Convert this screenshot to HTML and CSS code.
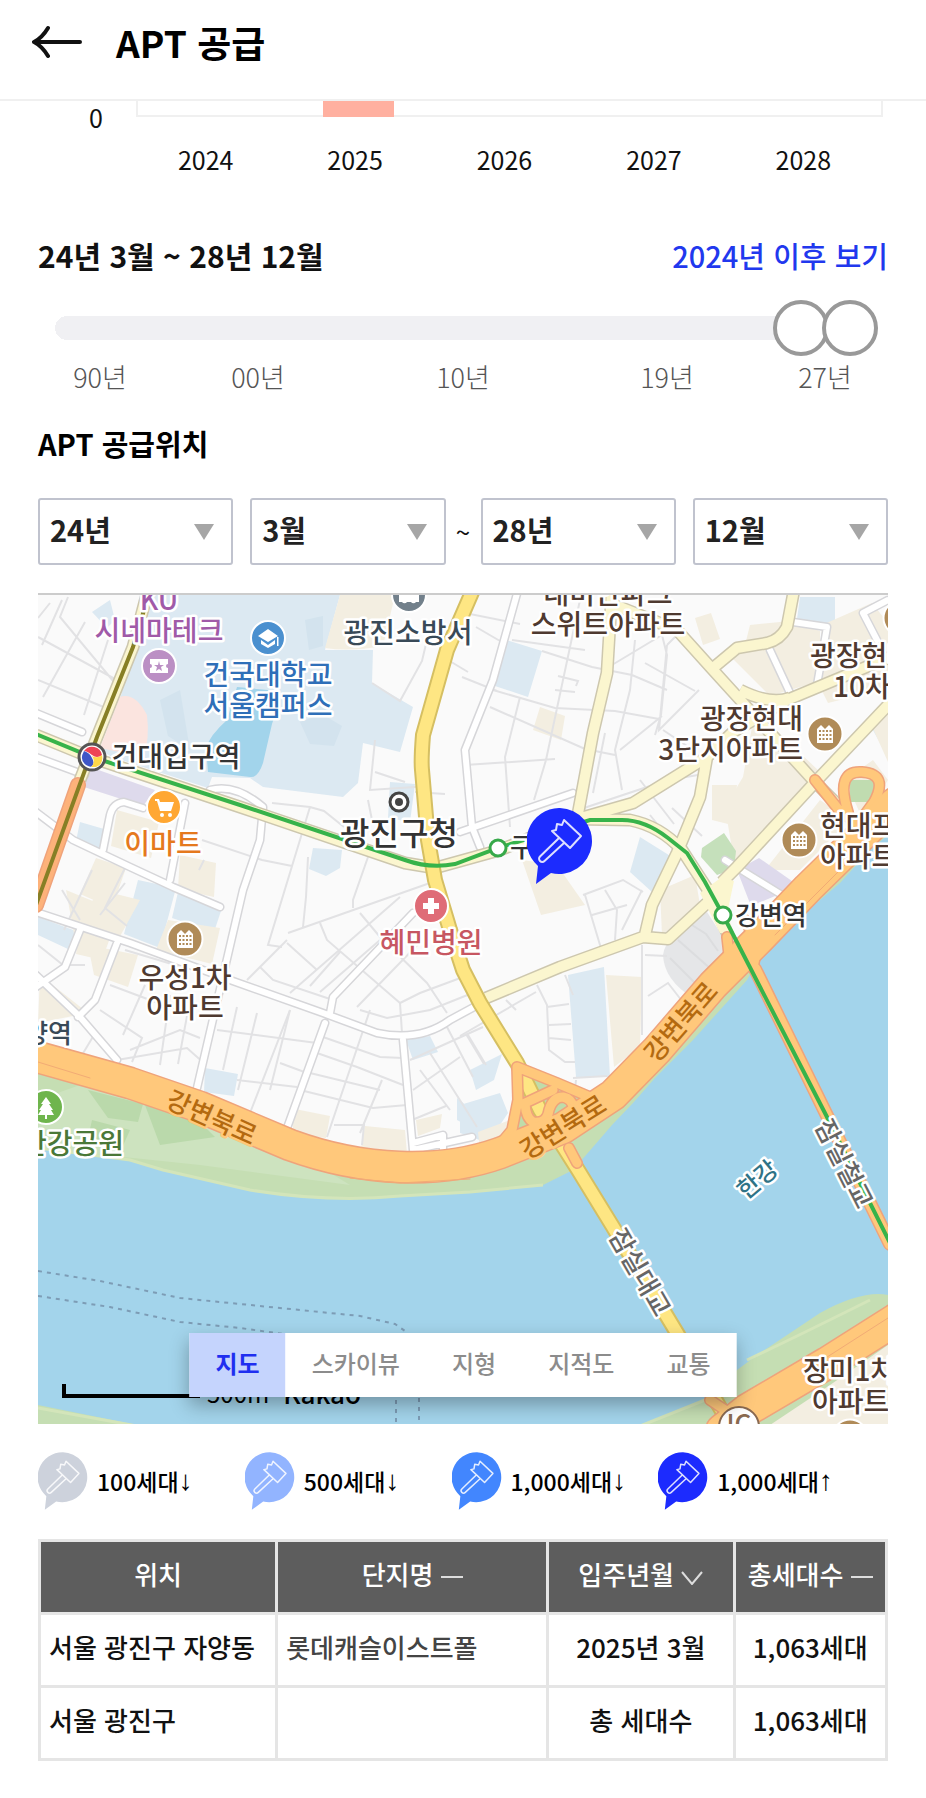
FILE: index.html
```html
<!DOCTYPE html>
<html lang="ko">
<head>
    <meta charset="UTF-8">
    <meta name="viewport" content="width=device-width, initial-scale=1.0">
    <title>APT 공급</title>
    <link rel="stylesheet" href="styles.css">
</head>
<body>
    <!-- 공통 아이콘 -->
    <svg class="sprite" aria-hidden="true">
        <symbol id="pin" viewBox="0 0 66 76">
            <path d="M33 0a33 33 0 1 1-9 65L9 76l2-18A33 33 0 0 1 33 0z" fill="currentColor"/>
            <path d="M25 23l4-1 1-6 5 1 2-5 17 16-11 12zM32 30L13 48.500a3 3 0 0 0 4.500 4.500L37 35" fill="none" stroke="#fff" stroke-opacity=".85" stroke-width="2" stroke-linejoin="round"/>
        </symbol>
        <symbol id="apt" viewBox="-20 -20 40 40">
            <circle r="17.500" fill="#b08b58" stroke="#fff" stroke-width="2"/>
            <path d="M-8 9V-5l4-4 4 4 4-4 4 4V9z" fill="#fff"/>
            <path d="M-6-3H7M-6 1H7M-6 5H7" stroke="#b08b58" stroke-width="2" stroke-dasharray="2 1.500"/>
        </symbol>
    </svg>

    <header class="header">
        <button type="button" class="back-btn" aria-label="뒤로">
            <svg width="50" height="34" viewBox="0 0 50 34" fill="none" stroke="#111" stroke-width="4" stroke-linecap="round" stroke-linejoin="round"><path d="M48 17H3M16 3Q10 13 2 17q8 4 14 14"/></svg>
        </button>
        <h1>APT 공급</h1>
    </header>

    <main class="container">
        <section class="chart">
            <span class="y-label">0</span>
            <div class="plot"><div class="bar"></div></div>
            <div class="x-labels"><span>2024</span><span>2025</span><span>2026</span><span>2027</span><span>2028</span></div>
        </section>

        <div class="period">
            <h2>24년 3월 ~ 28년 12월</h2>
            <a href="#">2024년 이후 보기</a>
        </div>

        <div class="slider">
            <input type="range" min="0" max="467" value="437" aria-label="시작 시기">
            <input type="range" min="0" max="467" value="467" aria-label="종료 시기">
        </div>
        <div class="slider-labels"><span>90년</span><span>00년</span><span>10년</span><span>19년</span><span>27년</span></div>

        <h2 class="section-title">APT 공급위치</h2>

        <div class="filters">
            <div class="select"><select aria-label="시작 연도"><option>24년</option></select></div>
            <div class="select"><select aria-label="시작 월"><option>3월</option></select></div>
            <span class="tilde">~</span>
            <div class="select"><select aria-label="종료 연도"><option>28년</option></select></div>
            <div class="select"><select aria-label="종료 월"><option>12월</option></select></div>
        </div>

        <div class="map">
            <svg class="map-canvas" viewBox="38 595 850 829" role="img" aria-label="광진구 지도">
                <defs>
                    <path id="white-roads" d="M36 713L82 732M36 757L85 775M36 812L73 840 130 867 173 887 220 907M103 850L110 815Q113 803 124 802L143 808M185 803L170 880M210 790Q235 783 263 807L260 840 243 890 197 1088M36 912L130 943 230 980 323 1013 377 1033Q420 1042 450 1020L487 1000M80 930L65 967 36 987M117 943L95 1000 78 1017M36 975L80 1017 117 1060M330 1013L333 997 413 913M325 1023L287 1128M403 1040L413 1150 472 1137M413 1143l30-8v14M518 590L493 680 465 750 472 827 480 847M460 832L573 793M793 622L827 627 817 685M770 650L790 693M888 600L863 613 877 640M725 860L790 900"/>
                    <path id="local-roads" d="M36 735L90 757 240 807 405 863 435 868 500 850 577 819 633 803 707 757 733 732 787 700 890 657M612 590L607 673 593 733 577 819M612 604L677 630 713 670 743 703 813 780 845 812M794 590L787 627Q780 640 767 643L737 648 713 668M890 703L820 777 737 867 722 882M707 757L700 797 677 853 652 905 645 935M486 998L560 967 643 937 668 939 707 903M577 819L630 820Q660 826 682 850L708 890 728 935M148 590L133 647 97 737 80 780M740 690Q770 705 790 698"/>
                    <path id="main-road" d="M473 590L447 650 423 735Q421 760 422 770L428 840 435 880 450 930 463 970 480 1003 517 1063 540 1110 578 1170 613 1227 677 1333 730 1425"/>
                    <path id="highway" d="M30 1055L130 1083 200 1107 290 1145Q345 1165 400 1167T500 1153L563 1128 613 1095 657 1050 713 985 760 938 808 888 895 803"/>
                    <path id="olympic-road" d="M895 1320L827 1363 747 1410 722 1430"/>
                    <path id="ramps" d="M517 1067L518 1100 512 1130 497 1148M517 1067L557 1083 597 1100M553 1090L523 1104M525 1104Q526 1118 533 1122 547 1124 549 1110 553 1097 563 1097 572 1099 573 1107M569 1148L577 1163M815 780L843 815 870 825M848 812Q835 770 862 772T874 802L850 835M727 937L729 955M745 920L758 945 753 967M710 1400l15 10"/>
                    <path id="rail-bridge" d="M755 969L890 1244"/>
                </defs>
                <rect x="38" y="595" width="850" height="830" fill="#fafafa"/>

                <!-- 구역 -->
                <g fill="#dce9f2">
                    <path d="M147 595H340L325 650H373L372 683 413 707 400 752 363 743 358 783 343 797 303 792 263 787 250 778 212 777 208 788 112 757 100 750 118 707z"/>
                    <path d="M92 612l18-12 5 20-8 8zM80 822l24 7-4 20-24-8zM390 782l25 2-5 38-22-4zM313 848l29 2-2 18-14 8-17-7z"/>
                    <path d="M506 640l36 11-14 46-36-12zM640 837l32 20-20 35-22-20zM800 597l35 0 0 28-38-6zM870 725l18-18v50z"/>
                    <path d="M138 880l38 8-16 60-36-14zM178 892l44 16-8 24-42-14zM38 917l38 14-8 18-30-14zM205 1068l33 6-4 22-30-4zM406 1040l24-4 8 16-25 8z"/>
                    <path d="M568 975l36-8 6 110-34 0zM470 1070l32-16-8 26-18 10zM460 1105l40-12 8 20-20 30-28-10zM457 1098l15 12v18l-15-8z"/>
                </g>
                <path d="M237 687L268 690Q278 710 272 724L263 763Q258 778 250 777L208 772 206 748Q210 735 227 720z" fill="#a2d4eb"/>
                <path d="M300 722l22-8 20 12-8 20-24-2zM305 620l18-4v30l-14 4zM160 700l20-10 10 60-22-14z" fill="#d3e3ee"/>
                <path d="M120 697Q135 692 147 715Q150 740 143 757L100 748z" fill="#fbe4df"/>
                <path d="M90 767L155 790 143 806 84 787z" fill="#dedaec"/>
                <g fill="#f3eee1">
                    <path d="M340 595H395L383 646Q350 652 325 648z"/>
                    <path d="M117 810l42 12-8 36-40-12zM180 855l36 8-2 34-36-8zM96 858l30 10-14 40-32-14zM66 890l34 14-26 30zM40 975l48 38-50 10zM88 945l50 10-10 32-34-12zM168 920l52 8-8 36-56-14zM80 930l30 8-8 22-26-6zM100 890l40 10-22 40-42-16z"/>
                    <path d="M695 618l16-5 9 26-17 6zM750 625l40-4 30 10v50l-50 15-40-40 16-15z"/>
                    <path d="M540 707l25 9-4 24-28-10zM822 625l50-22 16 20v65l-60 15-10-20zM755 710l65 62-85 95-10-60 18-30zM870 722l18 40v-60zM845 780l28-20 15 20-25 40z"/>
                    <path d="M522 860l35 5 28 40-44 10zM606 975l36 2-2 70-26 20zM712 785l25 0-5 40-20-5zM660 890l35-15 5 30-38 30zM290 1108l40 8-4 22-32-4zM365 1126l40 4 2 24-46-6zM416 1120l26-6-2 14-22 8zM478 1132l32-12-5 30-25 0zM820 800l30 20-50 50-35 0z"/>
                </g>
                <path d="M737 870l22-12 40 28-48 20z" fill="#dedaec"/>
                <path d="M702 848l22-15 12 18-2 18-17 6-16-18z" fill="#c5e0bb"/>
                <path d="M707 912L725 940 727 955 693 998Q664 980 663 955Q665 935 707 912z" fill="#e5e6e8"/>
                <path d="M692 925l14 9 12 17M678 940l34 30M670 958l26 26" stroke="#dcdddf" stroke-width="2" fill="none"/>
                <path d="M520 1070L560 1085 590 1100 545 1140 512 1140z" fill="#bfdcaa"/>

                <!-- 한강 -->
                <path d="M38 1060Q110 1075 200 1115T400 1172L540 1140 640 1060 755 930 888 800V1425H38z" fill="#c5deb3"/>
                <path d="M38 1100L80 1085 150 1100 260 1130 350 1185 200 1165 38 1148z" fill="#cde3bf"/>
                <path d="M88 1090l55 14-5 18-30-4zM92 1120l38 10-8 18-34-10zM145 1105l50 12 20 20-55 8z" fill="#bad9ab"/>
                <path d="M38 1148L130 1160 163 1170 250 1190Q330 1203 400 1196L470 1192 543 1185 573 1170 593 1147 612 1125 633 1103 655 1078 693 1040 747 980 758 960 793 923 840 883 870 850 888 835V1295Q862 1290 820 1313L760 1353 737 1370 710 1397 643 1425H137L38 1405z" fill="#a3d4eb"/>
                <path d="M38 1148L130 1160 163 1170 250 1190Q330 1203 400 1196L470 1192 543 1185M747 1360Q800 1335 870 1300M38 1408l99 18M640 1426l70-28" fill="none" stroke="#d3e5ba" stroke-width="3"/>
                <path d="M888 1345L830 1385 770 1425H888z" fill="#f3eee1"/>
                <path d="M38 1271L100 1281 180 1298 300 1310 360 1316 395 1324 405 1331M38 1296L110 1307 180 1322 240 1328 290 1335M396 1400v26M419 1398v28" fill="none" stroke="#7d9cb5" stroke-width="2" stroke-dasharray="4 5"/>

                <!-- 골목길 -->
                <g fill="none" stroke="#e2e2e4" stroke-width="2">
                    <path d="M50 603l-12 15M68 597l-8 20 54 65M38 637l77 42M38 680l68 28M85 622l-42 75M62 600L42 645M108 640L84 715M372 683l28 18 22-40 8-34M448 660l20 12M375 740l-5 50 60-4M375 772l30 10M415 792l30 2"/>
                    <path d="M272 803l38 4 14 4 20 16M310 807L268 945l14 2M308 857l-2 40-3 30M368 857l-15 43v8M368 800l4 20M204 860l-5 10M202 840l60 20 30 6M290 1010l-40 103M288 933l142-50M287 940l-40 40M400 897L290 993M380 940l-60 52M357 1007l70-72M320 923l7 17 73 63 2 30M287 943l30 27M260 967l13 13 60 20M360 913l20 24 47 46 20 30M360 1010l27 8 43-8 50-20M400 1003l20-10 43-16M340 952l-30 34"/>
                    <path d="M237 1007l-14 63M257 1013l-19 77M290 1010l-20 80M370 1010l-43 127M382 1080l-22 53M217 1030l100 13M280 1063l27 10M237 1080l60 7M323 1037l57 20 23 1M317 1053l40 14 46 18M310 1073l70 17M300 1090l73 18 34-3M430 1053l47 74M410 1060l73-33M413 1090l47-33M447 1027l26 50M420 1070l30 40M412 1120l34-14M468 1035l18 30M334 1125h30l-2 20"/>
                    <path d="M460 612l60 12M476 627l24 14M462 677l35 14M542 651l50 16 40 8 35 15M493 690l62 18 60 3 44 8M490 707l95 42 30 6M512 640L585 650M520 697l-15 60 5 70M580 600l-34 160-12 40M605 733l-12 60M612 665l50-30 5 20-6 60-6 20M635 640l-5 50-15 60 7 40M645 663l50 28M667 645l-8 85 40-40M667 645l14-14M640 605v20M465 765l90-6M620 750l42-34M663 730l30 20M558 676l20 5-2 5M555 690l20 2M578 810l60-20 30-10 30-5M640 780l34 44M672 808l30 28M650 815l48 60"/>
                    <path d="M585 895l18 60M583 895l40-15 20 12M592 915l35-10M605 890l12 20-2 30M642 890l-20 40M560 967l5-5 40-10M642 945v90M537 985l10 20 2 45 16 12h10M547 1007l22-3M549 1025l22-1M549 1038l22 2M565 975l8 20M506 1000l10 10M460 1036l76-44M466 1034l18 30M645 955l22 1M648 996l20-13 14 18M576 1080l-2 18M607 1076l-34 2"/>
                    <path d="M62 890l18 30M92 870l-28 60M125 868l-20 40 22 18M100 915l25-32M125 950l60 18M145 985l-22 50M100 1010l42 28-10 24M117 1060l70-12 18 16M82 1055l12-20M170 995l-10 70M190 1000l-12 64M110 985l80 30M130 1050l50-20 20 8M38 945l25 20 22 0"/>
                </g>

                <!-- 흰 도로 -->
                <g fill="none" stroke-linejoin="round" stroke-linecap="round">
                    <use href="#white-roads" stroke="#d6d6d9" stroke-width="9"/>
                    <use href="#white-roads" stroke="#fff" stroke-width="6"/>
                </g>

                <!-- 간선도로 -->
                <g fill="none" stroke-linejoin="round">
                    <use href="#local-roads" stroke="#cdc7ae" stroke-width="13"/>
                    <use href="#local-roads" stroke="#fbf6cf" stroke-width="10"/>
                    <path d="M700 893l22-16 12 4-6 28 4 24-12 0z" fill="#fbf6cf"/>
                    <use href="#main-road" stroke="#d5bf62" stroke-width="16"/>
                    <use href="#main-road" stroke="#fee683" stroke-width="12"/>
                </g>

                <!-- 강변북로, 올림픽대로 -->
                <path d="M850 780h24v22h-24z" fill="#c0dcb0"/>
                <g fill="none" stroke-linejoin="round" stroke-linecap="round">
                    <g stroke="#efa37b">
                        <use href="#highway" stroke-width="33"/>
                        <use href="#olympic-road" stroke-width="34"/>
                        <use href="#ramps" stroke-width="12"/>
                        <use href="#rail-bridge" stroke-width="14"/>
                        <path d="M78 785L36 905" stroke-width="16"/>
                    </g>
                    <g stroke="#ffc87b">
                        <use href="#ramps" stroke-width="9"/>
                        <use href="#rail-bridge" stroke-width="11"/>
                        <use href="#highway" stroke-width="30"/>
                        <use href="#olympic-road" stroke-width="31"/>
                        <path d="M78 785L36 905" stroke="#fdb27a" stroke-width="13"/>
                    </g>
                    <path d="M38 1062L90 1078M350 1178L400 1183 470 1179M775 935L888 822M810 1368L888 1318" stroke="#f2ab75" stroke-width="1"/>
                </g>

                <!-- 지하철 노선 -->
                <g fill="none" stroke-width="4">
                    <path d="M150 590L133 647 97 737 36 905" stroke="#877f25"/>
                    <path d="M36 734L92 757 240 805 405 860Q430 869 455 864L498 848 530 838 590 820H622Q645 820 668 838L687 853 705 882 723 915 827 1117 890 1243" stroke="#37b34a"/>
                </g>
                <g fill="#fff" stroke="#37a94a" stroke-width="3">
                    <circle cx="498" cy="848" r="8"/>
                    <circle cx="723" cy="915" r="8"/>
                </g>
                <circle cx="92" cy="757" r="13" fill="#fff" stroke="#555" stroke-width="3"/>
                <path d="M84 751a10 10 0 0 1 18 4q-5 4-10 0t-8-4z" fill="#ee4455"/>
                <path d="M84 751q-5 9 2 14 5 3 6 1 3-3 0-8-2-5-8-7z" fill="#3f57c8"/>
                <path d="M102 755q2 9-6 12h-5q5-5 1-11 6 3 10-1z" fill="#ffd84a"/>
                <circle cx="399" cy="802" r="9" fill="#fff" stroke="#444" stroke-width="3"/>
                <circle cx="399" cy="802" r="4" fill="#444"/>

                <!-- 장소 아이콘 -->
                <g stroke="#fff" stroke-width="2">
                    <circle cx="268" cy="638" r="17" fill="#4b90cf"/>
                    <circle cx="159" cy="666" r="17" fill="#bb8fc4"/>
                    <circle cx="409" cy="595" r="17" fill="#72808b"/>
                    <circle cx="164" cy="807" r="17" fill="#ffa733"/>
                    <circle cx="431" cy="906" r="17" fill="#df6c77"/>
                    <circle cx="46" cy="1107" r="17" fill="#6fb54d"/>
                </g>
                <g fill="#fff">
                    <path d="M258 636l10-7 10 7-10 6zM261 640l7 5 7-5v4l-7 4-7-4zM277 637h1.500v9H277z"/>
                    <path d="M150 659h18v5a2 2 0 0 0 0 4v5h-18v-5a2 2 0 0 0 0-4z"/>
                    <path d="M399 594h20v8h-3a3 3 0 0 1-5 0h-4a3 3 0 0 1-5 0h-3z"/>
                    <path d="M155 799h4l1 3h14l-3 9h-11l-3-10h-2z"/>
                    <circle cx="162" cy="815" r="2"/><circle cx="170" cy="815" r="2"/>
                    <path d="M428 898h6v5h5v6h-5v5h-6v-5h-5v-6h5z"/>
                    <path d="M46 1097l5 7h-2l4 6h-2l3 5h-7v4h-2v-4h-7l3-5h-2l4-6h-2z"/>
                </g>
                <path d="M159 661l1 4h4l-3 2 1 4-3-2-3 2 1-4-3-2h4z" fill="#bb8fc4"/>
                <use href="#apt" x="805" y="714" width="40" height="40"/>
                <use href="#apt" x="779" y="820" width="40" height="40"/>
                <use href="#apt" x="165" y="919" width="40" height="40"/>
                <use href="#apt" x="881" y="598" width="40" height="40"/>
                <use href="#apt" x="830" y="1417" width="40" height="40"/>
                <circle cx="739" cy="1427" r="20" fill="#fff" stroke="#8a6a50" stroke-width="2"/>

                <!-- 지명 -->
                <g class="label">
                    <g text-anchor="middle">
                        <g fill="#a05aa8"><text x="159" y="610">KU</text><text x="159" y="641">시네마테크</text></g>
                        <g fill="#2f6fb8"><text x="268" y="685">건국대학교</text><text x="268" y="716">서울캠퍼스</text></g>
                        <text x="408" y="643" fill="#394a58">광진소방서</text>
                        <text x="176" y="767" fill="#333">건대입구역</text>
                        <text x="163" y="854" fill="#e5791e">이마트</text>
                        <text x="399" y="845" fill="#333" class="label-lg">광진구청</text>
                        <text x="431" y="953" fill="#c75762">혜민병원</text>
                        <g fill="#4f3a30">
                            <text x="608" y="604">래미안파크</text><text x="608" y="635">스위트아파트</text>
                            <text x="185" y="988">우성1차</text><text x="185" y="1018">아파트</text>
                        </g>
                    </g>
                    <g text-anchor="end">
                        <g fill="#4f3a30"><text x="803" y="729">광장현대</text><text x="803" y="760">3단지아파트</text></g>
                        <text x="72" y="1043" fill="#394a58" class="label-sm">자양역</text>
                        <text x="124" y="1154" fill="#4a7838">한강공원</text>
                    </g>
                    <g fill="#4f3a30">
                        <text x="810" y="666">광장현대</text><text x="833" y="697">10차</text>
                        <text x="820" y="836">현대프라임</text><text x="820" y="867">아파트</text>
                        <text x="803" y="1381">장미1차</text><text x="812" y="1412">아파트</text>
                    </g>
                    <g class="label-sm" fill="#333"><text x="510" y="857">구의역</text><text x="735" y="925">강변역</text></g>
                    <g class="label-sm" text-anchor="middle">
                        <g fill="#b46a10" class="on-road">
                            <text transform="translate(208 1126) rotate(24)">강변북로</text>
                            <text transform="translate(568 1135) rotate(-32)">강변북로</text>
                            <text transform="translate(688 1028) rotate(-49)">강변북로</text>
                        </g>
                        <g fill="#666">
                            <text transform="translate(632 1277) rotate(60)">잠실대교</text>
                            <text transform="translate(836 1168) rotate(63)">잠실철교</text>
                        </g>
                        <text transform="translate(763 1186) rotate(-40)" fill="#2f7386" class="label-river">한강</text>
                        <text x="739" y="1433" fill="#8a6a50">IC</text>
                    </g>
                </g>
                <use href="#pin" x="527" y="808" width="66" height="76" color="#1c2bfe"/>
            </svg>

            <div class="scale"><span class="scale-bar"></span><span>500m</span><strong>Kakao</strong></div>
            <div class="map-tabs">
                <button type="button" class="active">지도</button>
                <button type="button">스카이뷰</button>
                <button type="button">지형</button>
                <button type="button">지적도</button>
                <button type="button">교통</button>
            </div>
        </div>

        <ul class="legend">
            <li><svg class="pin pin-100"><use href="#pin"/></svg><span>100세대</span><i>↓</i></li>
            <li><svg class="pin pin-500"><use href="#pin"/></svg><span>500세대</span><i>↓</i></li>
            <li><svg class="pin pin-1000"><use href="#pin"/></svg><span>1,000세대</span><i>↓</i></li>
            <li><svg class="pin pin-over"><use href="#pin"/></svg><span>1,000세대</span><i>↑</i></li>
        </ul>

        <table>
            <colgroup><col class="col-loc"><col class="col-name"><col class="col-date"><col class="col-count"></colgroup>
            <thead>
                <tr>
                    <th>위치</th>
                    <th>단지명 <svg width="22" height="14" viewBox="0 0 22 14"><path d="M0 6H22"/></svg></th>
                    <th>입주년월 <svg width="22" height="14" viewBox="0 0 22 14"><path d="M1 1L11 13 21 1"/></svg></th>
                    <th>총세대수 <svg width="22" height="14" viewBox="0 0 22 14"><path d="M0 6H22"/></svg></th>
                </tr>
            </thead>
            <tbody>
                <tr><td>서울 광진구 자양동</td><td class="name">롯데캐슬이스트폴</td><td class="center">2025년 3월</td><td class="center">1,063세대</td></tr>
                <tr><td>서울 광진구</td><td></td><td class="center">총 세대수</td><td class="center">1,063세대</td></tr>
            </tbody>
        </table>
    </main>
</body>
</html>
```

FILE: styles.css
```css
* {
    box-sizing: border-box;
}

body {
    margin: 0;
    background: #fff;
    color: #111;
    font-family: "Noto Sans CJK KR", "Noto Sans", sans-serif;
    font-size: 26px;
}

h1, h2 {
    margin: 0;
}

button, select {
    font-family: inherit;
}

.sprite {
    position: absolute;
    width: 0;
    height: 0;
}

.header {
    display: flex;
    align-items: center;
    gap: 34px;
    height: 101px;
    padding: 0 32px 16px;
    border-bottom: 2px solid #f0f0f0;
}

.header h1 {
    color: #000;
    font-size: 37px;
    line-height: 48px;
    font-weight: 700;
}

.back-btn {
    display: flex;
    padding: 0;
    border: none;
    background: none;
}

.container {
    padding: 0 38px 38px;
}

/* 공급 차트 */
.chart {
    display: grid;
    grid-template-columns: 65px 1fr;
    column-gap: 33px;
    padding-right: 5px;
    font-size: 25px;
}

.y-label {
    line-height: 32px;
    text-align: right;
}

.plot {
    height: 16px;
    padding-left: calc(25% - 2px);
    border: 2px solid #f0f0f0;
    border-top: none;
}

.bar {
    width: 71px;
    height: 16px;
    background: #ffb0a0;
}

.x-labels {
    grid-column: 2;
    display: grid;
    grid-template-columns: repeat(5, 1fr);
    margin: 8px 5px 0 -5px;
    line-height: 36px;
    text-align: center;
}

/* 기간 */
.period {
    display: flex;
    justify-content: space-between;
    align-items: center;
    margin-top: 56px;
    line-height: 44px;
}

.period h2 {
    font-size: 30px;
    font-weight: 700;
}

.period a {
    color: #2138ee;
    font-size: 29px;
    font-weight: 500;
    text-decoration: none;
}

.slider {
    display: grid;
    align-items: center;
    height: 56px;
    margin: 23px 10px 0 17px;
    background: linear-gradient(#f0f0f3, #f0f0f3) center / calc(100% - 24px) 24px no-repeat,
        radial-gradient(circle at 12px 28px, #f0f0f3 12px, transparent 12px);
}

.slider input {
    grid-area: 1 / 1;
    width: 100%;
    height: 56px;
    margin: 0;
    background: none;
    -webkit-appearance: none;
    appearance: none;
    pointer-events: none;
}

.slider input::-webkit-slider-thumb {
    -webkit-appearance: none;
    width: 56px;
    height: 56px;
    border: 4px solid #999;
    border-radius: 50%;
    background: #fff;
    pointer-events: auto;
}

.slider-labels {
    display: grid;
    grid-template-columns: 158fr 158fr 252fr 156fr 160fr;
    margin: 3px -17px 0;
    color: #555;
    font-size: 27px;
    font-weight: 300;
    line-height: 36px;
    text-align: center;
}

.section-title {
    margin-top: 26px;
    color: #000;
    font-size: 29px;
    font-weight: 700;
    line-height: 44px;
}

.filters {
    display: grid;
    grid-template-columns: 1fr 1fr 1px 1fr 1fr;
    column-gap: 17px;
    align-items: center;
    margin-top: 33px;
}

.select {
    position: relative;
}

.select::after {
    content: "";
    position: absolute;
    top: 26px;
    right: 19px;
    border: 10px solid transparent;
    border-top: 16px solid #a6a6a6;
    border-bottom: none;
    pointer-events: none;
}

.select select {
    display: block;
    width: 100%;
    height: 67px;
    padding: 0 10px 6px;
    border: 2px solid #c0c3ce;
    border-radius: 3px;
    background: #fff;
    color: #222;
    font-size: 29px;
    font-weight: 700;
    -webkit-appearance: none;
    appearance: none;
}

.tilde {
    justify-self: center;
}

/* 지도 */
.map {
    position: relative;
    margin-top: 28px;
    border-top: 2px solid #ccc;
    overflow: hidden;
}

.map-canvas {
    display: block;
    width: 100%;
    height: auto;
}

.label text {
    font-size: 28px;
    font-weight: 500;
    stroke: #fff;
    stroke-width: 5px;
    stroke-linejoin: round;
    paint-order: stroke;
}

.label .label-lg {
    font-size: 32px;
}

.label .label-sm, .label .label-sm text {
    font-size: 26px;
}

.label .label-sm .label-river {
    font-size: 24px;
}

.label .on-road text {
    stroke: #ffc87b;
}

.scale {
    position: absolute;
    left: 24px;
    bottom: 15px;
    display: flex;
    align-items: flex-end;
    gap: 7px;
    color: #000;
    font-size: 24px;
    line-height: 32px;
}

.scale strong {
    margin-left: 7px;
    font-size: 26px;
    font-weight: 500;
}

.scale-bar {
    width: 138px;
    height: 14px;
    margin-bottom: 11px;
    border: solid #000;
    border-width: 0 0 4px 4px;
}

.map-tabs {
    position: absolute;
    left: 50%;
    bottom: 27px;
    display: flex;
    transform: translateX(-50%);
    background: #fff;
    box-shadow: 0 8px 18px rgba(0, 0, 0, 0.3);
}

.map-tabs button {
    height: 64px;
    padding: 0 26px 6px;
    border: none;
    background: #fff;
    color: #8c8c8c;
    font-size: 24px;
    font-weight: 500;
    white-space: nowrap;
}

.map-tabs .active {
    background: #c5d4fd;
    color: #1f2ff0;
    font-weight: 700;
}

/* 범례 */
.legend {
    display: grid;
    grid-template-columns: repeat(4, 1fr);
    margin: 28px 23px 0 0;
    padding: 0;
    list-style: none;
    color: #000;
    font-size: 23px;
    font-weight: 500;
}

.legend li {
    display: flex;
    align-items: center;
    white-space: nowrap;
}

.legend i {
    font-family: "Liberation Serif", serif;
    font-size: 28px;
    font-style: normal;
    font-weight: 400;
    line-height: 32px;
}

.pin {
    width: 50px;
    height: 58px;
    margin-right: 9px;
}

.pin-100 { color: #cdd2dc; }
.pin-500 { color: #92b4ff; }
.pin-1000 { color: #4286fe; }
.pin-over { color: #1c2bfe; }

/* 목록 */
table {
    width: 100%;
    margin-top: 29px;
    border-collapse: collapse;
    table-layout: fixed;
    font-weight: 500;
}

.col-loc { width: 28%; }
.col-name { width: 32%; }
.col-date { width: 22%; }
.col-count { width: 18%; }

th, td {
    height: 73px;
    padding: 0 8px 8px;
    border: 3px solid #e5e5e5;
    text-align: left;
    white-space: nowrap;
}

th {
    padding: 0 0 8px;
    background: #5d5d5d;
    color: #fff;
    font-weight: 500;
    text-align: center;
}

th svg {
    fill: none;
    stroke: #ddd;
    stroke-width: 2;
}

.center {
    padding: 0 0 8px;
    text-align: center;
}

.name {
    color: #444;
}
```
